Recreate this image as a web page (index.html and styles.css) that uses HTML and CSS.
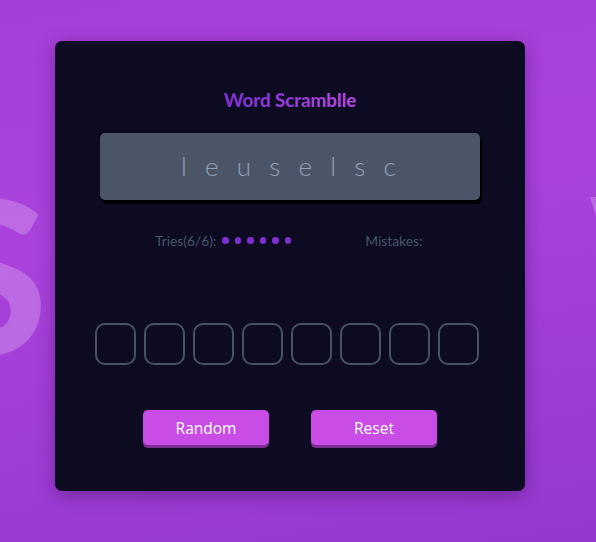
FILE: index.html
```html
<!DOCTYPE html>
<html lang="en">
<head>
<meta charset="utf-8">
<title>Word Scramble</title>
<link rel="stylesheet" href="styles.css">
</head>
<body>
<div class="ghost ghost-left" aria-hidden="true">S</div>
<div class="ghost ghost-right" aria-hidden="true">W</div>
<main class="card">
  <h1 class="title">Word Scramblle</h1>
  <div class="scrambled">leuselsc</div>
  <div class="status">
    <div class="tries">
      <span>Tries(6/6):</span>
      <span class="dots"><i></i><i></i><i></i><i></i><i></i><i></i></span>
    </div>
    <div class="mistakes">Mistakes:</div>
  </div>
  <div class="slots">
    <input class="slot" maxlength="1">
    <input class="slot" maxlength="1">
    <input class="slot" maxlength="1">
    <input class="slot" maxlength="1">
    <input class="slot" maxlength="1">
    <input class="slot" maxlength="1">
    <input class="slot" maxlength="1">
    <input class="slot" maxlength="1">
  </div>
  <div class="actions">
    <button class="btn">Random</button>
    <button class="btn">Reset</button>
  </div>
</main>
</body>
</html>
```

FILE: styles.css
```css
* { box-sizing: border-box; }
html, body { margin: 0; height: 100%; }
body {
  position: relative;
  overflow: hidden;
  height: 542px;
  padding: 41px 0 0 55px;
  font-family: "Lato", "DejaVu Sans", sans-serif;
  background: linear-gradient(170deg, #a63fd9 0%, #ab42dc 40%, #9538cf 100%);
}
.ghost {
  position: absolute;
  top: 166px;
  font-family: "Lato", sans-serif;
  font-weight: 900;
  font-size: 212px;
  line-height: 1;
  white-space: nowrap;
  color: rgba(255, 255, 255, 0.22);
}
.ghost-left { left: -69px; }
.ghost-right { left: 589px; top: 163px; }
.card {
  position: relative;
  width: 470px;
  height: 450px;
  border-radius: 7px;
  background: rgb(12, 11, 33);
  box-shadow: 0 4px 18px rgba(60, 10, 90, 0.45);
  display: flex;
  flex-direction: column;
  align-items: center;
  padding-top: 48px;
}
.title {
  margin: 0;
  font-size: 19px;
  line-height: 22px;
  font-weight: 900;
  letter-spacing: -0.2px;
  background: linear-gradient(90deg, #7a2ed2, #b645e2);
  -webkit-background-clip: text;
  background-clip: text;
  color: transparent;
}
.scrambled {
  margin-top: 22px;
  width: 380px;
  height: 67px;
  border-radius: 5px;
  background: #4a5567;
  box-shadow: 2px 4px 0 #000;
  color: #94a3b8;
  font-size: 26px;
  font-weight: 300;
  letter-spacing: 18.2px;
  display: flex;
  align-items: center;
  justify-content: center;
  padding-left: 15px;
  padding-bottom: 2px;
}
.status {
  margin-top: 32px;
  width: 380px;
  display: flex;
  padding-left: 55px;
  gap: 74px;
  font-size: 13.8px;
  line-height: 17px;
  color: #475569;
}
.tries { display: flex; align-items: center; gap: 6px; }
.dots { display: flex; gap: 6px; }
.dots i {
  display: block;
  width: 6.5px;
  height: 6.5px;
  border-radius: 50%;
  background: #7e2fd2;
}
.slots {
  margin-top: 74px;
  display: flex;
  gap: 8px;
  margin-left: -6px;
}
.slot {
  width: 41px;
  height: 42px;
  border: 2px solid #475262;
  border-radius: 10px;
  background: transparent;
  color: #cbd5e1;
  text-align: center;
  font-size: 20px;
}
.actions {
  margin-top: 45px;
  display: flex;
  gap: 42px;
}
.btn {
  width: 126px;
  height: 35px;
  border: 0;
  border-radius: 5px;
  background: #c94ce6;
  box-shadow: 0 3px 0 #7d2f91;
  color: #fff;
  font-family: "Open Sans", sans-serif;
  font-size: 15.5px;
  font-weight: 500;
  padding-top: 2px;
}
```
